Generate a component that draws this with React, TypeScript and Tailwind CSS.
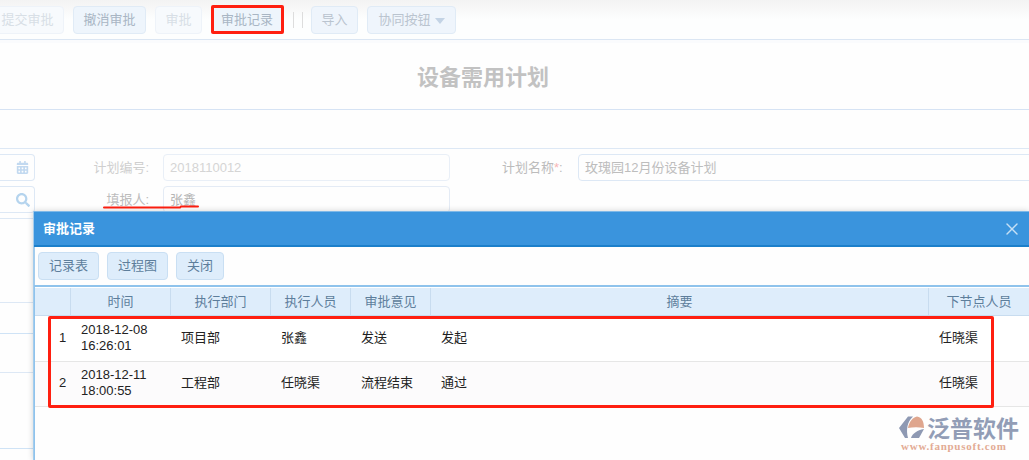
import { X } from "lucide-react";
import { FaCalendarAlt, FaSearch } from "react-icons/fa";

const font = "font-['Liberation_Sans','Noto_Sans_CJK_SC',sans-serif]";

const topButtons = [
  { label: "提交审批", cls: "bg-[#f7fafd] border-[#eef3f9] text-[#d8dfe6] w-[73px]" },
  { label: "撤消审批", cls: "bg-[#eef5fc] border-[#e0ebf6] text-[#a9b6c4] w-[73px]" },
  { label: "审批", cls: "bg-[#f7fafd] border-[#eef3f9] text-[#d8dfe6] w-[47px]" },
  { label: "审批记录", cls: "bg-[#eef5fc] border-[#e0ebf6] text-[#a9b6c4] w-[72px]" },
];

const columns = "grid grid-cols-[36px_100px_100px_80px_80px_498px_100px]";

const headers = ["", "时间", "执行部门", "执行人员", "审批意见", "摘要", "下节点人员"];

const rows = [
  { no: "1", date: "2018-12-08", time: "16:26:01", dept: "项目部", user: "张鑫", opinion: "发送", memo: "发起", next: "任晓渠", cls: "h-[46px] bg-white" },
  { no: "2", date: "2018-12-11", time: "18:00:55", dept: "工程部", user: "任晓渠", opinion: "流程结束", memo: "通过", next: "任晓渠", cls: "h-[45px] bg-[#fcfbfc]" },
];

function Watermark() {
  return (
    <div className="absolute left-[899px] top-[414px] w-[122px]">
      <div className="flex items-center h-[26px]">
        <svg width="27" height="22" viewBox="0 0 27 22" className="shrink-0">
          <path d="M0 12 L9 0.5 L14 0.5 C8 6 7 14 9 22 L6 22 Z" fill="#8e99b3" />
          <path d="M9 12 C10 6 14 1 18 0.5 C23 1 25 6 25 12 C20 11 14 11 9 12 Z" fill="#dfa68e" />
          <path d="M12 22 C13 18 18 14 25 13 L20 22 Z" fill="#8e99b3" />
        </svg>
        <span className="ml-[1px] text-[23px] leading-[24px] font-bold text-[#929db6] font-['Noto_Sans_CJK_SC',sans-serif] whitespace-nowrap">泛普软件</span>
      </div>
      <div className="absolute left-[2px] top-[26px] whitespace-nowrap text-[11px] leading-[12px] font-bold text-[#e3ab94] tracking-[0.75px] font-['Liberation_Serif',serif]">
        www.fanpusoft.com
      </div>
    </div>
  );
}

export default function App() {
  return (
    <div className={`relative w-[1029px] h-[460px] overflow-hidden bg-[#fefefe] ${font}`}>
      {/* page toolbar */}
      <div className="h-[40px] border-b border-[#dbe6f3] bg-gradient-to-b from-[#f3f3f3] via-[#fdfefe] to-[#fdfefe] to-20% pt-[6px] -ml-[9px] flex items-start gap-[9px] text-[13px]">
        {topButtons.map(b => (
          <button key={b.label} className={`h-[28px] rounded-[4px] border text-center ${b.cls}`}>
            {b.label}
          </button>
        ))}
        <div className="flex gap-[8px] ml-[1px] mt-[6px]">
          <div className="w-px h-[16px] bg-[#dddddd]" />
          <div className="w-px h-[16px] bg-[#dddddd]" />
        </div>
        <button className="h-[28px] w-[47px] -ml-[1px] rounded-[4px] border bg-[#eff5fc] border-[#e0ebf6] text-[#bac4cf]">导入</button>
        <button className="h-[28px] w-[89px] rounded-[4px] border bg-[#eff5fc] border-[#e0ebf6] text-[#bac4cf] flex items-center justify-center gap-[4px]">
          协同按钮
          <span className="mt-[2px] border-x-[5px] border-x-transparent border-t-[6px] border-t-[#c3d3e5]" />
        </button>
      </div>
      <div className="h-[3px] bg-[#fafbfd]" />

      {/* title */}
      <div className="h-[67px] border-b border-[#d6e3f4] flex items-center justify-center">
        <h1 className="text-[22px] font-bold text-[#c2c2c2] mr-[63px] mt-[2px]">设备需用计划</h1>
      </div>
      <div className="h-[39px] border-b border-[#dde8f5]" />

      {/* form */}
      <div className="pt-[5px] flex flex-col gap-[5px] text-[13px]">
        <div className="flex items-center h-[27px]">
          <div className="w-[35px] h-[27px] shrink-0 border border-l-0 border-[#dde8f5] rounded-r-[4px] flex items-center justify-end pr-[5px]">
            <FaCalendarAlt size={13} className="text-[#c2d9f0]" />
          </div>
          <label className="w-[116px] pr-[2px] shrink-0 text-right text-[#cfcfcf]">计划编号:</label>
          <div className="w-[287px] h-[27px] ml-[12px] shrink-0 border border-[#e9eff7] rounded-[4px] pl-[6px] leading-[25px] text-[#d5d5d5]">2018110012</div>
          <label className="w-[64px] ml-[52px] shrink-0 text-[#bcbcbc] whitespace-nowrap">
            计划名称<span className="text-[#f7b5b5]">*</span>:
          </label>
          <div className="w-[470px] h-[27px] ml-[12px] shrink-0 border border-[#dde8f5] rounded-[4px] pl-[6px] leading-[25px] text-[#bdbdbd]">玫瑰园12月份设备计划</div>
        </div>
        <div className="flex items-center h-[27px]">
          <div className="w-[35px] h-[27px] shrink-0 border border-l-0 border-[#dde8f5] rounded-r-[4px] flex items-center justify-end pr-[4px]">
            <FaSearch size={14} className="text-[#b5d4ee]" />
          </div>
          <label className="w-[116px] pr-[2px] shrink-0 text-right text-[#bcbcbc]">填报人:</label>
          <div className="w-[287px] h-[27px] ml-[12px] shrink-0 border border-[#e4ebf5] rounded-[4px] pl-[6px] leading-[25px] text-[#b5b5b5]">张鑫</div>
        </div>
      </div>

      {/* rows behind the dialog */}
      <div className="w-[33px] flex flex-col mt-[5px]">
        <div className="border-t border-[#dde8f5] h-[84px]" />
        <div className="border-t border-[#dde8f5] h-[31px]" />
        <div className="border-t border-[#cfe3f6] h-[39px]" />
        <div className="border-t border-[#dde8f5] h-[76px]" />
        <div className="border-t border-[#cfe3f6] h-[10px]" />
      </div>

      {/* annotation under the reporter */}
      <svg className="absolute left-[100px] top-[202px]" width="102" height="8" viewBox="0 0 102 8">
        <path d="M4 5.5 L80 5.5 L81 4.5 L98 4.5" fill="none" stroke="#ff1f10" strokeWidth="2" strokeLinecap="round" />
      </svg>

      {/* dialog */}
      <div className="absolute left-[33px] top-[211px] w-[996px] h-[249px] bg-[#fefefe] border-l-2 border-[#a3cced] shadow-[0_0_6px_rgba(0,0,0,0.18)] flex flex-col">
        <div className="h-[36px] shrink-0 -ml-[1px] bg-[#3a94dd] border-t border-[#7fb9e8] border-b-2 border-b-[#1c7fca] flex items-center justify-between pl-[9px] pr-[7px]">
          <span className="text-[13px] font-bold text-white">审批记录</span>
          <X size={20} className="text-[#c5e0f5]" strokeWidth={1.7} />
        </div>
        <div className="h-[38px] shrink-0 flex items-center gap-[8px] pl-[3px] text-[13px]">
          <button className="w-[61px] h-[28px] rounded-[4px] border border-[#c9dff3] bg-[#deedfb] text-[#5d7e9b]">记录表</button>
          <button className="w-[61px] h-[28px] rounded-[4px] border border-[#c9dff3] bg-[#deedfb] text-[#5d7e9b]">过程图</button>
          <button className="w-[48px] h-[28px] rounded-[4px] border border-[#c9dff3] bg-[#deedfb] text-[#5d7e9b]">关闭</button>
        </div>
        <div className="flex-1 border-t-2 border-l border-[#8fc3ec] ml-[-1px] text-[13px]">
          <div className={`${columns} h-[29px] bg-[#deedfb] border-t border-white border-b border-b-[#c8dcef] text-[#5d7e9b]`}>
            {headers.map((h, i) => (
              <div key={i} className="flex items-center justify-center border-r border-[#c8dcef] last:border-r-0">{h}</div>
            ))}
          </div>
          {rows.map(r => (
            <div key={r.no} className={`${columns} items-center pb-[2px] border-b border-[#e6e6e6] text-[#222222] ${r.cls}`}>
              <div className="pl-[24px]">{r.no}</div>
              <div className="pl-[10px] leading-[16px]">
                <div>{r.date}</div>
                <div>{r.time}</div>
              </div>
              <div className="pl-[10px]">{r.dept}</div>
              <div className="pl-[10px]">{r.user}</div>
              <div className="pl-[10px]">{r.opinion}</div>
              <div className="pl-[10px]">{r.memo}</div>
              <div className="pl-[10px]">{r.next}</div>
            </div>
          ))}
        </div>
      </div>

      {/* red highlight boxes */}
      <div className="absolute left-[211px] top-[5px] w-[73px] h-[29px] border-[3px] border-[#ff1f10] rounded-[2px]" />
      <div className="absolute left-[48px] top-[316px] w-[946px] h-[92px] border-[3px] border-[#ff1f10] rounded-[2px]" />

      <Watermark />
    </div>
  );
}
